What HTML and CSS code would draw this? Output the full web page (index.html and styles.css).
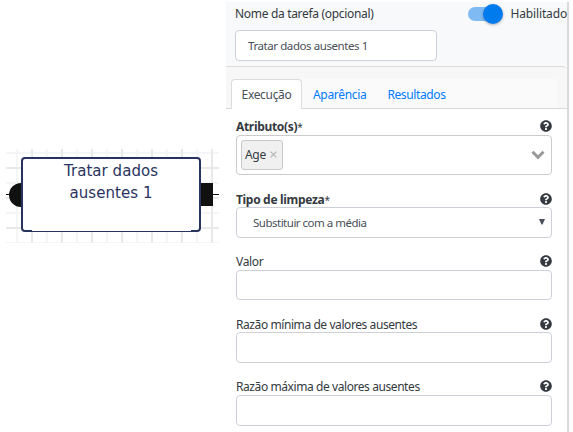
FILE: index.html
```html
<!DOCTYPE html>
<html lang="pt-BR">
<head>
<meta charset="utf-8">
<title>Tratar dados ausentes</title>
<link rel="stylesheet" href="styles.css">
</head>
<body>
<svg class="defs" width="0" height="0" aria-hidden="true">
  <symbol id="help" viewBox="0 0 512 512"><path fill="#343a40" d="M504 256c0 137-111 248-248 248S8 393 8 256 119 8 256 8s248 111 248 248zM262.700 90c-54.500 0-89.300 23-116.500 63.800-3.500 5.300-2.400 12.400 2.700 16.300l34.700 26.300c5.200 3.900 12.600 3 16.700-2.100 17.900-22.700 30.100-35.800 57.300-35.800 20.400 0 45.700 13.100 45.700 33 0 15-12.400 22.700-32.500 34C247.100 238.500 216 254.900 216 296v4c0 6.600 5.400 12 12 12h56c6.600 0 12-5.400 12-12v-1.300c0-28.500 83.200-29.600 83.200-106.700 0-58-60.200-102-116.500-102zM256 338c-25.400 0-46 20.600-46 46s20.600 46 46 46 46-20.600 46-46-20.600-46-46-46z"/></symbol>
</svg>
<div class="app">
  <section class="workspace">
    <div class="canvas">
      <span class="wire wire-in"></span>
      <span class="wire wire-out"></span>
      <span class="port-in"></span>
      <span class="port-out"></span>
      <div class="node">Tratar dados<br>ausentes 1</div>
    </div>
  </section>
  <aside class="panel">
    <header class="head">
      <div class="head-row">
        <label class="name-label">Nome da tarefa (opcional)</label>
        <span class="switch"><span class="knob"></span></span>
        <span class="enabled">Habilitado</span>
      </div>
      <div class="input name-input">Tratar dados ausentes 1</div>
    </header>
    <div class="card">
      <nav class="tabs">
        <a class="tab active">Execução</a>
        <a class="tab">Aparência</a>
        <a class="tab results">Resultados</a>
      </nav>
      <div class="fields">
        <div class="field attr">
          <div class="label"><span><b>Atributo(s)</b><i>*</i></span><svg class="help"><use href="#help"/></svg></div>
          <div class="input multi">
            <span class="tag">Age<svg class="remove" viewBox="0 0 7 7"><path d="M.6.6l5.800 5.800M6.400.6L.6 6.400"/></svg></span>
            <svg class="chevron" viewBox="0 0 14 10"><path d="M1.500 1.800L7 7.300l5.500-5.500"/></svg>
          </div>
        </div>
        <div class="field tipo">
          <div class="label"><span><b>Tipo de limpeza</b><i>*</i></span><svg class="help"><use href="#help"/></svg></div>
          <div class="input select"><span>Substituir com a média</span><svg class="arrow" viewBox="0 0 6 6"><path d="M0 0h6L3.500 5.600h-1z"/></svg></div>
        </div>
        <div class="field valor">
          <div class="label"><span>Valor</span><svg class="help"><use href="#help"/></svg></div>
          <div class="input"></div>
        </div>
        <div class="field minima">
          <div class="label"><span class="ratio">Razão mínima de valores ausentes</span><svg class="help"><use href="#help"/></svg></div>
          <div class="input"></div>
        </div>
        <div class="field maxima">
          <div class="label"><span class="ratio">Razão máxima de valores ausentes</span><svg class="help"><use href="#help"/></svg></div>
          <div class="input"></div>
        </div>
      </div>
    </div>
  </aside>
</div>
</body>
</html>
```
FILE: styles.css
```css
* { box-sizing: border-box; }
body { margin: 0; background: #fff; font: 12px/18px "Noto Sans", "Open Sans", sans-serif; letter-spacing: -.32px; color: #343a40; overflow: hidden; }
.defs { position: absolute; }
.app { display: flex; height: 432px; }
.workspace { width: 226px; padding: 149px 0 0 6px; }
.canvas {
  position: relative; width: 213px; height: 94px;
  background:
    linear-gradient(90deg, #e9e9e9 2px, transparent 2px) 25px 0 / 30px 30px,
    linear-gradient(#e9e9e9 2px, transparent 2px) 0 18px / 30px 30px,
    linear-gradient(90deg, #f5f5f7 2px, transparent 2px) 10px 0 / 30px 30px,
    linear-gradient(#f5f5f7 2px, transparent 2px) 0 3px / 30px 30px;
}
.node {
  position: absolute; left: 15px; top: 8px; width: 180px; height: 75px; padding-top: 1px;
  border: 2px solid #29335f; border-radius: 4px; background: #fff;
  font: 15px/22px "DejaVu Sans", sans-serif; letter-spacing: .05px; color: #29335f; text-align: center;
}
.node::after { content: ""; position: absolute; left: 9px; right: 8px; bottom: -1px; height: 1px; background: #fff; }
.wire { position: absolute; top: 45px; height: 1px; width: 8px; background: #111; }
.wire-in { left: 0; }
.wire-out { right: 0; }
.port-in { position: absolute; left: 3px; top: 34px; width: 24px; height: 24px; border-radius: 50%; background: #111; }
.port-out { position: absolute; left: 190px; top: 34px; width: 17px; height: 23px; background: #111; }

.panel { width: 343px; margin-top: 2px; border-right: 2px solid #dadada; background: #fff; }
.head { height: 64px; padding: 2px 0 0 9px; background: #f8f9fb; }
.head-row { display: flex; align-items: center; height: 20px; }
.name-label { width: 233px; letter-spacing: -.32px; }
.switch { width: 33px; height: 14px; border-radius: 7px; background: #7fbaf3; display: flex; align-items: center; justify-content: flex-end; }
.knob { flex: none; width: 20px; height: 20px; margin-right: -2px; border-radius: 50%; background: #007bed; box-shadow: 0 1px 3px rgba(0,0,0,.3); }
.enabled { margin-left: 10px; white-space: nowrap; letter-spacing: -.15px; }
.input { height: 31px; border: 1px solid #ced0d9; border-radius: 4px; background: #fff; display: flex; align-items: center; }
.name-input { width: 202px; margin-top: 6px; padding-left: 12px; font-size: 11.500px; letter-spacing: -.42px; color: #495057; }
.card { border-top: 1px solid #dcdcdc; border-top-right-radius: 4px; background: #f7f7f7; padding-top: 12px; }
.tabs { display: flex; height: 29px; margin: 0 10px 0 5px; background: #fafafa; }
.tab { display: flex; align-items: center; justify-content: center; height: 30px; color: #007bff; padding: 1px 11px 0; }
.results { letter-spacing: -.38px; padding-left: 10px; }
.active { width: 71px; position: relative; border: 1px solid #dcdcdc; border-bottom: 0; border-radius: 4px 4px 0 0; background: #fff; color: #495057; padding: 0; }
.fields { border-top: 1px solid #d9d9d9; background: #fff; height: 324px; padding: 8px 15px 0 10px; }
.label { display: flex; justify-content: space-between; align-items: center; height: 18px; white-space: nowrap; }
.label > span { padding-top: 2px; }
.label i { font-style: normal; font-size: 10px; }
.tipo .label, .minima .label { padding-top: 1px; }
.ratio { letter-spacing: -.42px; }
.field { display: flex; flex-direction: column; }
.help { width: 12px; height: 12px; }
.attr { height: 72px; }
.tipo { height: 63px; }
.valor { height: 62px; }
.minima { height: 63px; }
.valor .input { height: 30px; }
.field .multi { height: 40px; border-color: #ccc; padding: 0 6px 1px 4px; justify-content: space-between; }
.tag { display: flex; align-items: center; width: 42px; height: 30px; padding-left: 3px; border: 1px solid #c9c9c9; border-radius: 3px; background: #f0f0f0; }
.remove { width: 7px; height: 7px; margin-left: 4px; fill: none; stroke: #b5b5b5; stroke-width: 1.200; }
.chevron { width: 14px; height: 10px; fill: none; stroke: #999; stroke-width: 3; }
.select { padding: 0 6px 0 16px; justify-content: space-between; font-size: 11.500px; letter-spacing: -.5px; color: #495057; }
.arrow { width: 6px; height: 6px; fill: #495057; margin-bottom: 2px; }
```
